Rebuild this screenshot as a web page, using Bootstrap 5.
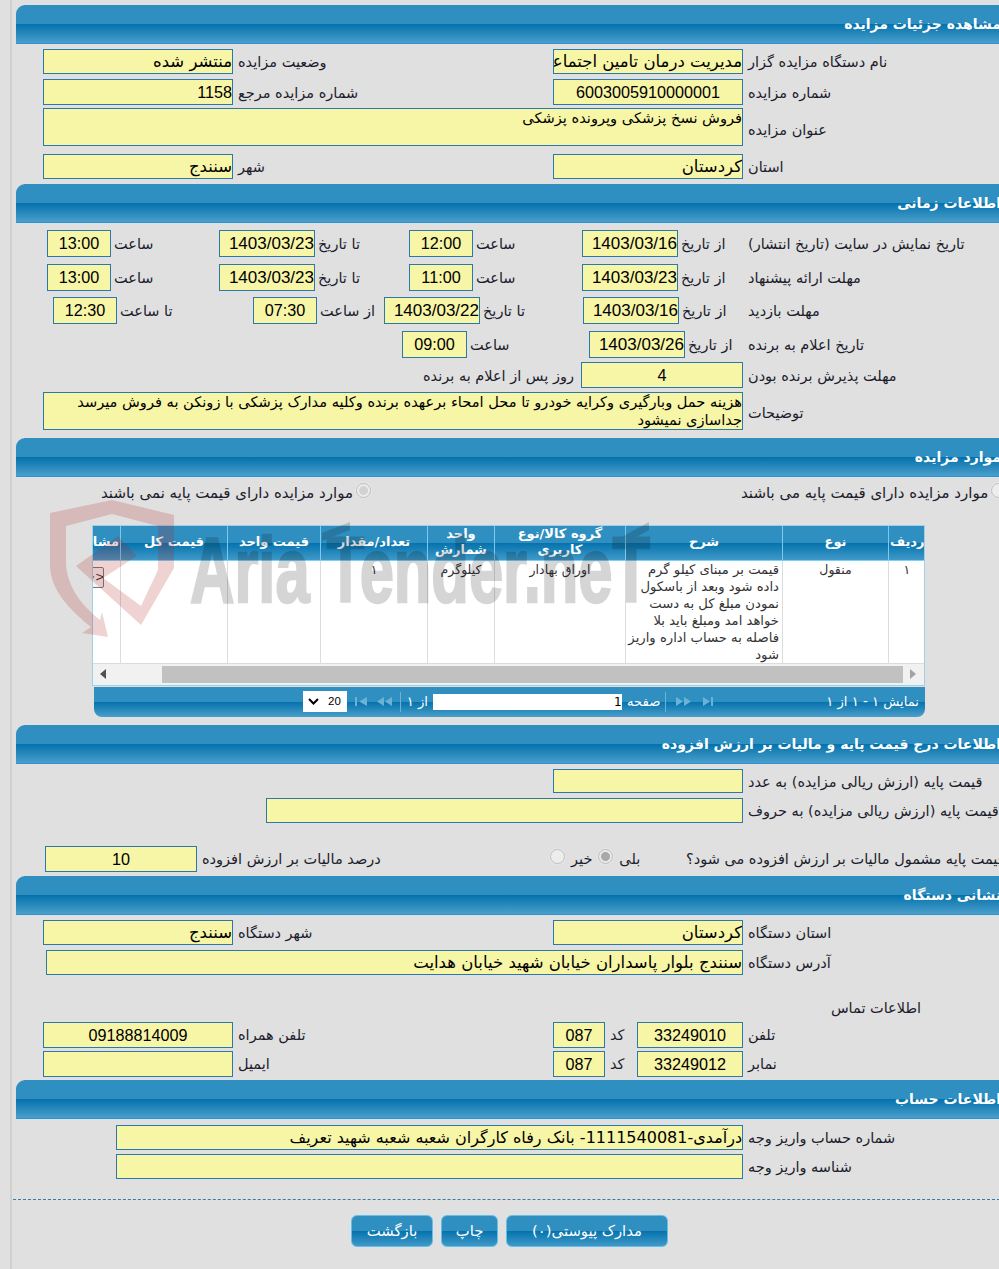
<!DOCTYPE html>
<html lang="fa">
<head>
<meta charset="utf-8">
<title>مشاهده جزئیات مزایده</title>
<link rel="stylesheet" href="https://cdn.jsdelivr.net/npm/bootstrap@5.3.0/dist/css/bootstrap.min.css">
<style>
html,body{height:1269px;overflow:hidden;background:#e0e0e0;}
body{margin:0;font-family:"DejaVu Sans","Liberation Sans",sans-serif;font-size:14.5px;color:#1c1c2c;position:relative;}
.pg{margin-left:10px;width:1000px;height:1269px;border-left:2px solid #d0d0d0;padding-top:5px;direction:ltr;overflow:hidden;}
.secbar{margin-left:4px;height:39px;border-top-left-radius:9px;border-bottom:1px solid #2b93d6;background:linear-gradient(#2f8fc0 0,#2f8fc0 51%,#0572ad 51%,#4a9fca 100%);color:#fff;font-weight:700;font-size:14px;line-height:39px;direction:rtl;white-space:nowrap;}
.secbar span{display:block;padding-right:9px;}
.fr{display:grid;align-items:stretch;}
.fd{display:flex;align-items:center;gap:5px;min-width:0;white-space:nowrap;}
.gap3{gap:3px;}
.qd{gap:6px;}
.box{background:#f7f5a6;border:1px solid #2b78ab;color:#000;font-size:16.5px;direction:rtl;overflow:hidden;white-space:nowrap;height:100%;flex:none;line-height:23px;text-align:right;}
.acct{font-size:16px;}
.num{font-family:"Liberation Sans",sans-serif;font-size:16.2px;line-height:24px;}
.dt{font-size:17px;line-height:25px;}
.ctr{text-align:center;}
.multi{font-size:14.6px;line-height:18px;}
.lb{direction:rtl;padding-top:3px;}
.lbw{font-size:15px;padding-top:1px;}
.lbt{padding-top:7px;}
.lbn{padding-top:5px;}
.h24{height:24px}.h25{height:25px}.h38{height:38px}
.m5{margin-top:5px}.m6{margin-top:6px}.m7{margin-top:7px}.m8{margin-top:8px}.m9{margin-top:9px}.m23{margin-top:23px}
.w52{width:52px}.w64{width:64px}.w65{width:65px}.w96{width:96px}.w106{width:106px}.w152{width:152px}.w162{width:162px}.w190{width:190px}.w477{width:477px}.w627{width:627px}.w697{width:697px}.w700{width:700px}
.ga{grid-template-columns:510px 1fr;padding-left:31px}
.gt{grid-template-columns:172px 190px 173px 166px 1fr;padding-left:35px}
.gv{grid-template-columns:200px 131px 199px 165px 1fr;padding-left:41px}
.gw{grid-template-columns:187px 159px 1fr;padding-left:390px}
.gd{grid-template-columns:158px 1fr;padding-left:411px}
.gf{grid-template-columns:705px 1fr;padding-left:31px}
.gf2{grid-template-columns:482px 1fr;padding-left:254px}
.gf3{grid-template-columns:702px 1fr;padding-left:34px}
.gq{grid-template-columns:505px 136px 1fr;padding-left:33px}
.gc{grid-template-columns:510px 84px 1fr;padding-left:31px}
.ge{grid-template-columns:632px 1fr;padding-left:104px}
.gr{grid-template-columns:640px 1fr;padding-left:89px}
.rdo{width:15px;height:15px;border-radius:50%;background:#ededed;border:1px solid #bfbfbf;box-shadow:0 0 0 1px #e6e6e6;flex:none;display:block;}
.rdo.on{background:radial-gradient(circle,#a9a9a9 0 4px,#e9e9e9 5px);}
.rdo.soft{background:radial-gradient(circle,#d2d2d2 0 4px,#ececec 5px);}
.rup{margin-top:-5px;}
.rw{height:22px;margin-top:4px;}
.contact{margin-left:819px;margin-top:25px;height:18px;width:90px;line-height:18px;direction:rtl;white-space:nowrap;}
.gridbox{margin-left:80px;margin-top:22px;width:833px;border:1px solid #9fd0ea;background:#fff;overflow:hidden;}
.gridtbl{table-layout:fixed;width:857px;margin:0 0 0 -26px;direction:rtl;border-collapse:collapse;--bs-table-bg:transparent;}
.cw36{width:36px}.cw106{width:106px}.cw157{width:157px}.cw131{width:131px}.cw67{width:67px}.cw107{width:107px}.cw93{width:93px}.cw53{width:53px}
.gridtbl th{height:34px;padding:0 1px 1px;background:linear-gradient(#2f8fc0 0,#2f8fc0 50%,#0572ad 50%,#3f99c8 100%);color:#fff;font-size:13px;line-height:16px;font-weight:700;text-align:center;border:0;border-left:1px solid #7cc8ee;border-bottom:1px solid #7cd0f2;vertical-align:middle;white-space:nowrap;overflow:hidden;}
.gridtbl td{height:102px;padding:0 3px;font-size:12.5px;line-height:17px;text-align:center;vertical-align:top;border:0;border-left:1px solid #dcdcdc;border-bottom:1px solid #dcdcdc;color:#333;background:transparent;white-space:nowrap;overflow:hidden;}
.gridtbl td.rt{text-align:right;font-size:13.2px;}
.gobtn{display:block;width:20px;height:21px;margin:6px auto 0;border:1px solid #777;border-radius:2px;background:#f4f4f4;direction:ltr;font-size:12px;line-height:18px;color:#333;overflow:hidden;text-align:center;}
.sb{height:21px;background:#f1f1f1;padding:0 0 0 7px;}
.sbthumb{margin-left:56px;width:741px;height:17px;background:#c1c1c1;}
.sbr{margin-left:7px;}
.pgr{margin-left:82px;margin-top:1px;width:831px;height:30px;border-radius:0 0 8px 8px;background:linear-gradient(#2f8fc0 0,#2f8fc0 50%,#0572ad 50%,#4a9fca 100%);color:#fff;font-size:13.2px;direction:ltr;white-space:nowrap;padding:0 6px 0 209px;}
.pginp{width:189px;height:16px;background:#fff;color:#000;font-size:12px;line-height:16px;text-align:left;padding-left:181px;margin-left:5px;}
.pgsel{width:44px;height:21px;background:#fff;color:#000;font-family:"Liberation Sans",sans-serif;font-size:11.5px;line-height:21px;padding:0 5px;gap:9px;}
.sep{width:1px;height:20px;background:#6fb1d3;}
.pic{flex:none;fill:#6bb3d6;}
.ml5{margin-left:5px}.ml7{margin-left:7px}.ml8{margin-left:8px}.ml10{margin-left:10px}.ml12{margin-left:12px}
.pgtxt{direction:rtl;}
.fix20{width:20px;direction:rtl;}
.dash{border-top:1px dashed #3b7ba5;margin:20px 0 0 1px;height:0;}
.act{padding-left:339px;margin-top:15px;}
.actbtn{height:32px;padding:0;border-radius:6px;border:1px solid #62bfe8;background:linear-gradient(#2f8fc0 0,#2f8fc0 50%,#0572ad 50%,#3f99c8 100%);color:#fff;font-size:14.8px;line-height:28px;direction:rtl;}
.actbtn:hover{color:#fff;}
.bw82{width:82px}.bw57{width:57px}.bw162{width:162px}
.wm{position:absolute;left:0;top:0;pointer-events:none;}
</style>
</head>
<body>
<div class="pg">
  <div class="secbar"><span>مشاهده جزئیات مزایده</span></div>
  <div class="fr ga h25 m5"><div class="fd"><div class="box w190">منتشر شده</div><span class="lb">وضعیت مزایده</span></div><div class="fd"><div class="box w190">مدیریت درمان تامین اجتماعی</div><span class="lb">نام دستگاه مزایده گزار</span></div></div>
  <div class="fr ga h24 m5"><div class="fd"><div class="box num w190">1158</div><span class="lb">شماره مزایده مرجع</span></div><div class="fd"><div class="box num ctr w190">6003005910000001</div><span class="lb">شماره مزایده</span></div></div>
  <div class="fr gf h38 m5"><div class="fd"><div class="box multi w700">فروش نسخ پزشکی وپرونده پزشکی</div></div><div class="fd"><span class="lb lbt">عنوان مزایده</span></div></div>
  <div class="fr ga h25 m8"><div class="fd"><div class="box w190">سنندج</div><span class="lb">شهر</span></div><div class="fd"><div class="box w190">کردستان</div><span class="lb">استان</span></div></div>
  <div class="secbar m5"><span>اطلاعات زمانی</span></div>
  <div class="fr gt h25 m7"><div class="fd gap3"><div class="box num ctr w64">13:00</div><span class="lb">ساعت</span></div><div class="fd gap3"><div class="box num dt w96">1403/03/23</div><span class="lb">تا تاریخ</span></div><div class="fd gap3"><div class="box num ctr w64">12:00</div><span class="lb">ساعت</span></div><div class="fd gap3"><div class="box num dt w96">1403/03/16</div><span class="lb">از تاریخ</span></div><div class="fd"><span class="lb">تاریخ نمایش در سایت (تاریخ انتشار)</span></div></div>
  <div class="fr gt h24 m9"><div class="fd gap3"><div class="box num ctr w64">13:00</div><span class="lb">ساعت</span></div><div class="fd gap3"><div class="box num dt w96">1403/03/23</div><span class="lb">تا تاریخ</span></div><div class="fd gap3"><div class="box num ctr w64">11:00</div><span class="lb">ساعت</span></div><div class="fd gap3"><div class="box num dt w96">1403/03/23</div><span class="lb">از تاریخ</span></div><div class="fd"><span class="lb">مهلت ارائه پیشنهاد</span></div></div>
  <div class="fr gv h25 m9"><div class="fd gap3"><div class="box num ctr w64">12:30</div><span class="lb">تا ساعت</span></div><div class="fd gap3"><div class="box num ctr w64">07:30</div><span class="lb">از ساعت</span></div><div class="fd gap3"><div class="box num dt w96">1403/03/22</div><span class="lb">تا تاریخ</span></div><div class="fd gap3"><div class="box num dt w96">1403/03/16</div><span class="lb">از تاریخ</span></div><div class="fd"><span class="lb">&nbsp;مهلت بازدید</span></div></div>
  <div class="fr gw h24 m9"><div class="fd gap3"><div class="box num ctr w65">09:00</div><span class="lb">ساعت</span></div><div class="fd gap3"><div class="box num dt w96">1403/03/26</div><span class="lb">از تاریخ</span></div><div class="fd"><span class="lb">تاریخ اعلام به برنده</span></div></div>
  <div class="fr gd h25 m7"><div class="fd"><span class="lb">روز پس از اعلام به برنده</span></div><div class="fd"><div class="box num ctr w162">4</div><span class="lb">مهلت پذیرش برنده بودن</span></div></div>
  <div class="fr gf h38 m5"><div class="fd"><div class="box multi w700">هزینه حمل وبارگیری وکرایه خودرو تا محل امحاء برعهده برنده وکلیه مدارک پزشکی با زونکن به فروش میرسد<br>جداسازی نمیشود</div></div><div class="fd"><span class="lb lbn">توضیحات</span></div></div>
  <div class="secbar m8"><span>موارد مزایده</span></div>
  <div class="fr gr rw"><div class="fd gap3"><span class="lb lbw">موارد مزایده دارای قیمت پایه نمی باشند</span><span class="rdo soft rup"></span></div><div class="fd gap3"><span class="lb lbw">موارد مزایده دارای قیمت پایه می باشند</span><span class="rdo rup"></span></div></div>
  <div class="gridbox">
    <table class="table gridtbl mb-0">
      <colgroup><col class="cw36"><col class="cw106"><col class="cw157"><col class="cw131"><col class="cw67"><col class="cw107"><col class="cw93"><col class="cw107"><col class="cw53"></colgroup>
      <thead><tr><th>ردیف</th><th>نوع</th><th>شرح</th><th>گروه کالا/نوع<br>کاربری</th><th>واحد<br>شمارش</th><th>تعداد/مقدار</th><th>قیمت واحد</th><th>قیمت کل</th><th>مشاهده</th></tr></thead>
      <tbody><tr><td>۱</td><td>منقول</td><td class="rt">قیمت بر مبنای کیلو گرم<br>داده شود وبعد از باسکول<br>نمودن مبلغ کل به دست<br>خواهد امد ومبلغ باید بلا<br>فاصله به حساب اداره واریز<br>شود</td><td>اوراق بهادار</td><td>کیلوگرم</td><td>۱</td><td></td><td></td><td><span class="gobtn">&gt;&gt;</span></td></tr></tbody>
    </table>
    <div class="sb d-flex align-items-center">
      <svg width="6" height="10" viewBox="0 0 6 10"><path d="M6 0V10L0 5Z" fill="#505050"/></svg>
      <div class="sbthumb"></div>
      <svg class="sbr" width="6" height="10" viewBox="0 0 6 10"><path d="M0 0V10L6 5Z" fill="#a3a3a3"/></svg>
    </div>
  </div>
  <div class="pgr d-flex align-items-center">
    <div class="pgsel d-flex align-items-center"><svg width="11" height="7" viewBox="0 0 11 7"><path d="M1 1 5.500 5.500 10 1" fill="none" stroke="#000" stroke-width="2"/></svg><span>20</span></div>
    <svg class="pic ml8" width="12" height="9" viewBox="0 0 12 9"><path d="M0 0H2V9H0ZM12 0V9L4 4.500Z"/></svg>
    <svg class="pic ml10" width="15" height="9" viewBox="0 0 15 9"><path d="M7 0V9L0 4.500ZM15 0V9L8 4.500Z"/></svg>
    <span class="sep ml8"></span>
    <span class="fix20 ml7">از ۱</span>
    <div class="pginp">1</div>
    <span class="pgtxt ml5">صفحه</span>
    <span class="sep ml5"></span>
    <svg class="pic ml10" width="15" height="9" viewBox="0 0 15 9"><path d="M0 0V9L7 4.500ZM8 0V9L15 4.500Z"/></svg>
    <svg class="pic ml12" width="10" height="9" viewBox="0 0 10 9"><path d="M0 0V9L7 4.500ZM8 0H10V9H8Z"/></svg>
    <span class="pgtxt ms-auto">نمایش ۱ - ۱ از ۱</span>
  </div>
  <div class="secbar m8"><span>اطلاعات درج قیمت پایه و مالیات بر ارزش افزوده</span></div>
  <div class="fr ga h24 m5"><div class="fd"></div><div class="fd"><div class="box w190"></div><span class="lb">قیمت پایه (ارزش ریالی مزایده) به عدد</span></div></div>
  <div class="fr gf2 h25 m5"><div class="fd"><div class="box w477"></div></div><div class="fd"><span class="lb">قیمت پایه (ارزش ریالی مزایده) به حروف</span></div></div>
  <div class="fr gq h25 m23"><div class="fd"><div class="box num ctr w152">10</div><span class="lb">درصد مالیات بر ارزش افزوده</span></div><div class="fd qd"><span class="rdo rup"></span><span class="lb">خیر</span><span class="rdo on rup"></span><span class="lb">بلی</span></div><div class="fd"><span class="lb">قیمت پایه مشمول مالیات بر ارزش افزوده می شود؟</span></div></div>
  <div class="secbar m5"><span>نشانی دستگاه</span></div>
  <div class="fr ga h25 m5"><div class="fd"><div class="box w190">سنندج</div><span class="lb">شهر دستگاه</span></div><div class="fd"><div class="box w190">کردستان</div><span class="lb">استان دستگاه</span></div></div>
  <div class="fr gf3 h24 m5"><div class="fd"><div class="box w697">سنندج بلوار پاسداران خیابان شهید خیابان هدایت</div></div><div class="fd"><span class="lb">آدرس دستگاه</span></div></div>
  <div class="contact">اطلاعات تماس</div>
  <div class="fr gc h24 m5"><div class="fd"><div class="box num ctr w190">09188814009</div><span class="lb">تلفن همراه</span></div><div class="fd"><div class="box num ctr w52">087</div><span class="lb">کد</span></div><div class="fd"><div class="box num ctr w106">33249010</div><span class="lb">تلفن</span></div></div>
  <div class="fr gc h24 m5"><div class="fd"><div class="box w190"></div><span class="lb">ایمیل</span></div><div class="fd"><div class="box num ctr w52">087</div><span class="lb">کد</span></div><div class="fd"><div class="box num ctr w106">33249012</div><span class="lb">نمابر</span></div></div>
  <div class="secbar m5"><span>اطلاعات حساب</span></div>
  <div class="fr ge h24 m6"><div class="fd"><div class="box acct w627">درآمدی-1111540081- بانک رفاه کارگران شعبه شعبه شهید تعریف</div></div><div class="fd"><span class="lb">شماره حساب واریز وجه</span></div></div>
  <div class="fr ge h25 m5"><div class="fd"><div class="box w627"></div></div><div class="fd"><span class="lb">شناسه واریز وجه</span></div></div>
  <div class="dash"></div>
  <div class="act d-flex gap-2"><button type="button" class="btn actbtn bw82">بازگشت</button><button type="button" class="btn actbtn bw57">چاپ</button><button type="button" class="btn actbtn bw162">مدارک پیوستی(۰)</button></div>
</div>
<svg class="wm" width="999" height="1269" viewBox="0 0 999 1269" aria-hidden="true">
  <path fill="#b11c1c" fill-opacity=".2" d="M50 513 112 500 174 515 174 568 141 625 76 566 118 536 137 556 103 578 141 606 158 570 158 526 112 514 66 526 66 565C68 590 85 608 100 620L102 612 108 637 82 633 91 627C70 610 50 590 50 565Z"/>
  <g opacity=".16" fill="#000" stroke="#000">
    <text x="190" y="602" stroke-width="2.500" font-family="Liberation Sans" font-weight="700" font-size="92" textLength="460" lengthAdjust="spacingAndGlyphs">Aria Tender.neT</text>
    <path stroke="none" d="M322 533 350 522 350 530 322 541ZM620 538 649 522 649 530 620 546Z"/>
  </g>
</svg>
</body>
</html>
